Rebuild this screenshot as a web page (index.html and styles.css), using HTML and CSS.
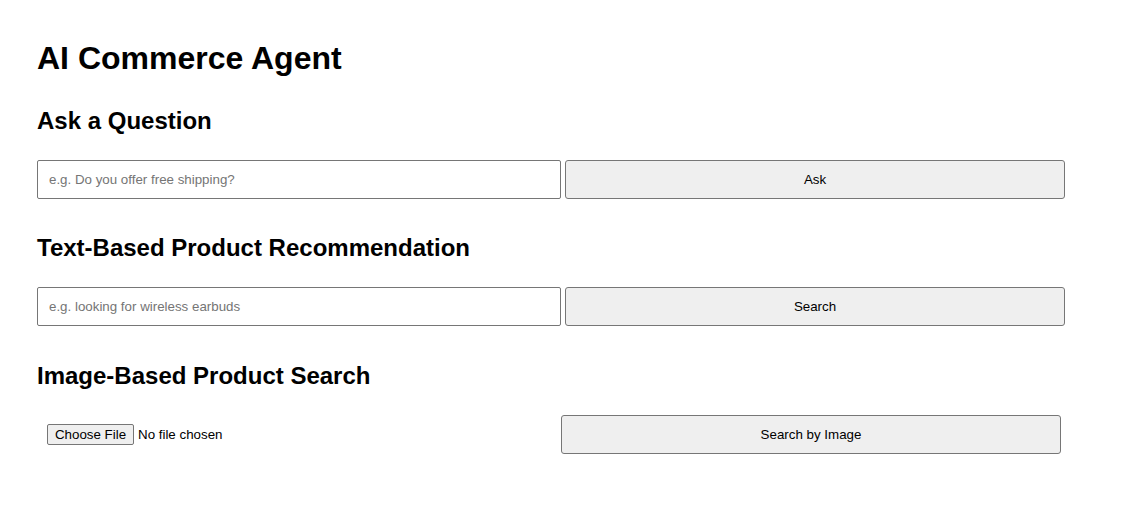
FILE: index.html
```html
<!DOCTYPE html>
<html lang="en">
<head>
<meta charset="utf-8">
<title>AI Commerce Agent</title>
<link rel="stylesheet" href="styles.css">
</head>
<body>
<main class="page">
  <h1 class="title">AI Commerce Agent</h1>

  <section class="section">
    <h2 class="section-title">Ask a Question</h2>
    <div class="row">
      <input class="text-input" type="text" placeholder="e.g. Do you offer free shipping?">
      <button class="action-btn" type="button">Ask</button>
    </div>
  </section>

  <section class="section">
    <h2 class="section-title">Text-Based Product Recommendation</h2>
    <div class="row">
      <input class="text-input" type="text" placeholder="e.g. looking for wireless earbuds">
      <button class="action-btn" type="button">Search</button>
    </div>
  </section>

  <section class="section section-last">
    <h2 class="section-title">Image-Based Product Search</h2>
    <div class="row">
      <div class="file-field">
        <span class="file-btn">Choose File</span>
        <span class="file-name">No file chosen</span>
      </div>
      <button class="action-btn" type="button">Search by Image</button>
    </div>
  </section>
</main>
</body>
</html>
```

FILE: styles.css
```css
html, body {
  margin: 0;
  padding: 0;
  background: #ffffff;
}

body {
  font-family: "Liberation Sans", Arial, sans-serif;
  color: #000000;
}

.page {
  padding: 40px 37px 0 37px;
}

.title {
  margin: 0 0 30px 0;
  font-size: 32px;
  font-weight: bold;
  line-height: normal;
}

.section + .section {
  margin-top: 35px;
}

.section + .section-last {
  margin-top: 36px;
}

.section-title {
  margin: 0 0 25px 0;
  font-size: 24px;
  font-weight: bold;
  line-height: normal;
}

.row {
  display: flex;
  align-items: center;
  gap: 4px;
}

.text-input {
  box-sizing: border-box;
  width: 524px;
  height: 39px;
  margin: 0;
  padding: 0 11px;
  border: 1px solid #767676;
  border-radius: 2px;
  font-family: "Liberation Sans", Arial, sans-serif;
  font-size: 13.33px;
  color: #000000;
  background: #ffffff;
  outline: none;
}

.text-input::placeholder {
  color: #757575;
}

.action-btn {
  box-sizing: border-box;
  width: 500px;
  height: 39px;
  margin: 0;
  padding: 0;
  border: 1px solid #767676;
  border-radius: 3px;
  background: #efefef;
  font-family: "Liberation Sans", Arial, sans-serif;
  font-size: 13.33px;
  color: #000000;
}

.file-field {
  box-sizing: border-box;
  width: 520px;
  padding-left: 10px;
  display: flex;
  align-items: center;
  gap: 4px;
  font-size: 13.33px;
}

.file-btn {
  box-sizing: border-box;
  height: 21px;
  width: 87px;
  display: inline-flex;
  align-items: center;
  justify-content: center;
  border: 1px solid #767676;
  border-radius: 2px;
  background: #efefef;
  font-size: 13.33px;
}

.file-name {
  font-size: 13.33px;
}
```
